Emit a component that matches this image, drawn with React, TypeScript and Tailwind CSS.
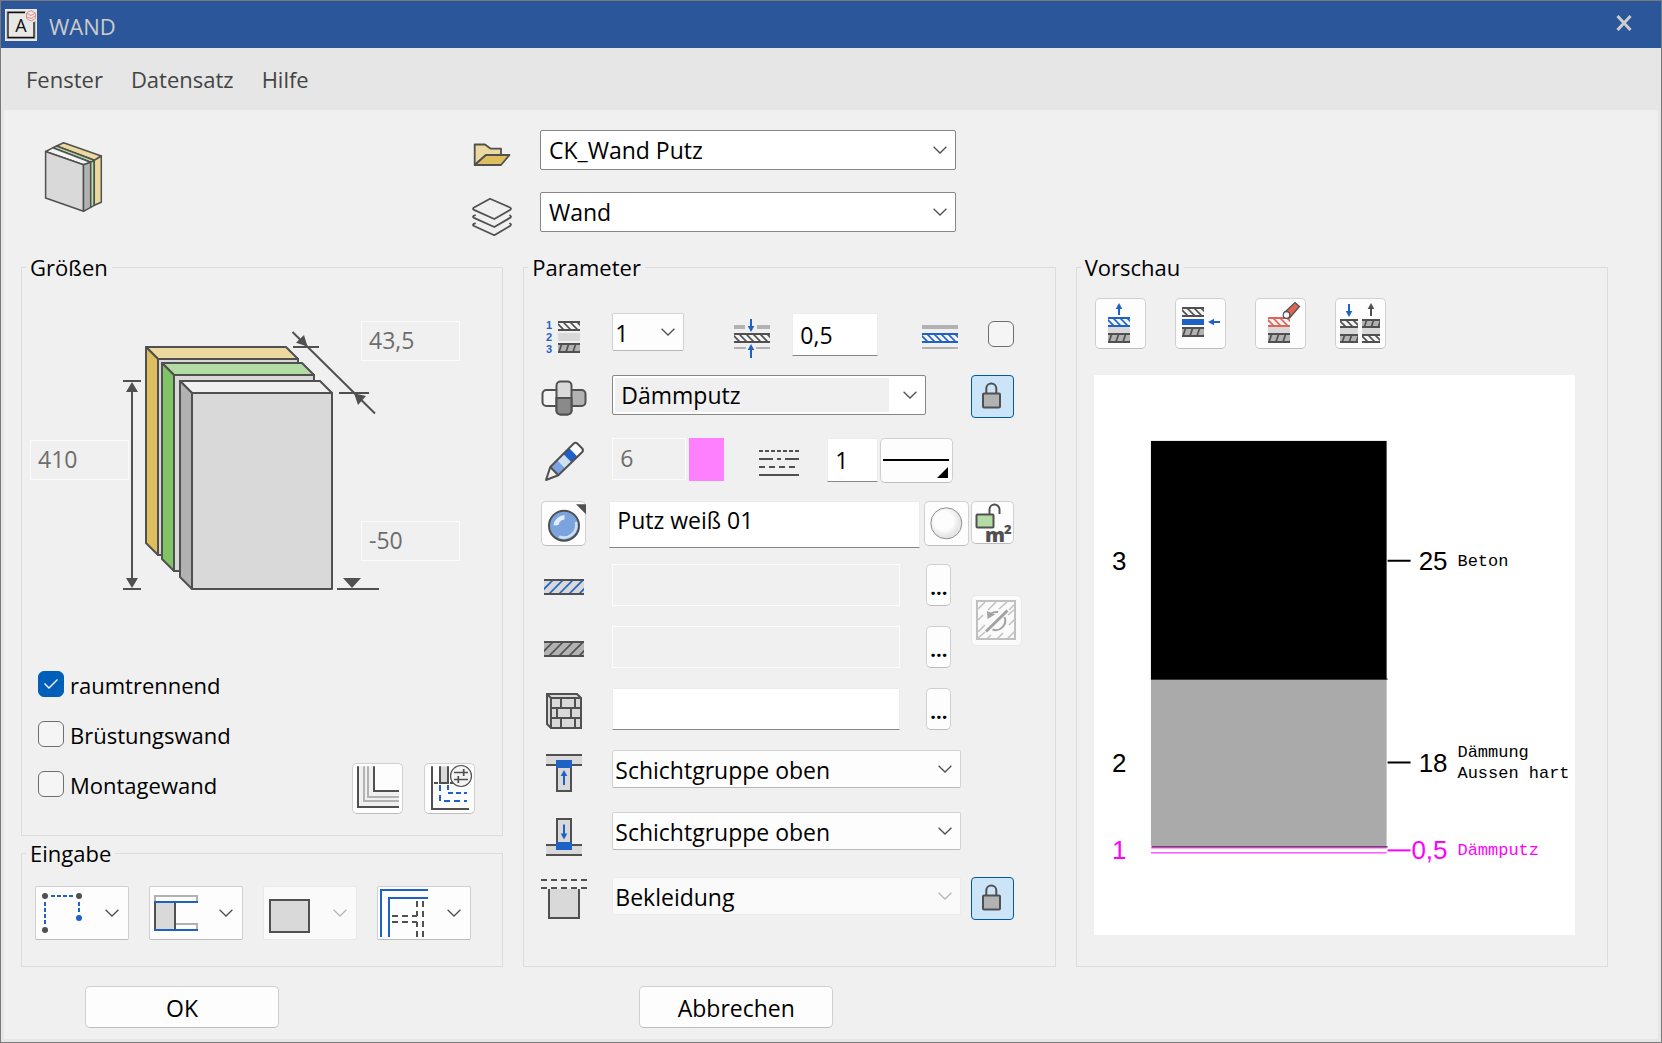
import type { ReactNode } from 'react';

const DARK = '#505050';
const BLUE = '#1f62c7';
const RED = '#e06455';
const LIGHT = '#d9d9d9';
const MID = '#b2b2b2';

function Icon({
  w,
  h,
  viewBox,
  className = '',
  children,
}: {
  w: number;
  h: number;
  viewBox?: string;
  className?: string;
  children: ReactNode;
}) {
  return (
    <svg
      width={w}
      height={h}
      viewBox={viewBox ?? `0 0 ${w} ${h}`}
      fill="none"
      stroke={DARK}
      strokeWidth={2}
      className={`shrink-0 overflow-visible ${className}`}
      aria-hidden
    >
      {children}
    </svg>
  );
}

/* Band with solid top and bottom edges and diagonal strokes between them. */
function Hatch({
  x,
  y,
  w,
  h,
  color = DARK,
  edge = color,
  fill = '#f4f4f4',
  lean = 'left',
  step = 7,
  shift = 0,
}: {
  x: number;
  y: number;
  w: number;
  h: number;
  color?: string;
  edge?: string;
  fill?: string;
  lean?: 'left' | 'right' | 'flat';
  step?: number;
  shift?: number;
}) {
  const run = lean === 'left' ? h : lean === 'right' ? -h / 3 : -h;
  const count = Math.ceil((w + 2 * h) / step) + 1;
  return (
    <svg x={x} y={y} width={w} height={h}>
      <rect width={w} height={h} fill={fill} stroke="none" />
      {Array.from({ length: count }, (_, i) => {
        const start = i * step - h + shift;
        return <line key={i} x1={start} y1={0} x2={start + run} y2={h} stroke={color} strokeWidth={1.7} />;
      })}
      <path d={`M0 1H${w}M0 ${h - 1}H${w}`} stroke={edge} />
    </svg>
  );
}

function Arrow({ x, y, length, dir, color = BLUE }: { x: number; y: number; length: number; dir: number; color?: string }) {
  return (
    <g transform={`translate(${x} ${y}) rotate(${dir})`} stroke={color}>
      <path d={`M0 4V${length}`} />
      <path d="M0 0L3.300 6H-3.300Z" fill={color} stroke="none" />
    </g>
  );
}

function Chevron({ muted = false, className = '' }: { muted?: boolean; className?: string }) {
  return (
    <svg
      width="14"
      height="8"
      viewBox="0 0 14 8"
      fill="none"
      stroke={muted ? '#b8b8b8' : '#505050'}
      strokeWidth="1.300"
      className={className}
      aria-hidden
    >
      <path d="M.6 .8L7 7L13.400 .8" />
    </svg>
  );
}

function Group({ title, className = '', children }: { title: string; className?: string; children: ReactNode }) {
  return (
    <fieldset className={`min-w-0 border border-[#dcdcdc] ${className}`}>
      <legend className="ml-1 px-1 text-[22px] leading-7">{title}</legend>
      {children}
    </fieldset>
  );
}

function Select({
  label,
  value,
  frame = 'soft',
  className = '',
  disabled = false,
}: {
  label: string;
  value: string;
  frame?: 'soft' | 'strong' | 'inset';
  className?: string;
  disabled?: boolean;
}) {
  const frames = {
    soft: 'h-[38px] pt-0.5 pl-[2px] leading-8 border-[#d2d2d2] border-b-[#b9b9b9] bg-[#fdfdfd]',
    strong: 'h-10 pl-2 leading-9 border-[#868686] bg-white',
    inset: 'h-10 pl-2 leading-9 border-[#868686] bg-[#f0f0f0] shadow-[inset_0_0_0_2px_white,inset_-36px_0_0_0_white]',
  };
  return (
    <div className={`relative ${className}`}>
      <select
        aria-label={label}
        disabled={disabled}
        className={`w-full appearance-none rounded-xs border text-[23px] text-black ${
          disabled ? 'h-[38px] border-[#ebebeb] bg-[#fafafa] pt-0.5 pl-[2px] leading-8 opacity-100' : frames[frame]
        }`}
      >
        <option>{value}</option>
      </select>
      <Chevron muted={disabled} className="pointer-events-none absolute top-1/2 right-[9px] -translate-y-1/2" />
    </div>
  );
}

function Field({
  label,
  value = '',
  disabled = false,
  className = '',
}: {
  label: string;
  value?: string;
  disabled?: boolean;
  className?: string;
}) {
  return (
    <input
      type="text"
      aria-label={label}
      defaultValue={value}
      disabled={disabled}
      className={`min-w-0 border px-[7px] text-[23px] leading-8 ${
        disabled
          ? 'border-[#fbfbfb] bg-[#f0f0f0] pb-[3px] text-[#6d6d6d]'
          : 'border-[#ececec] border-b-[#868686] bg-white text-black'
      } ${className}`}
    />
  );
}

function ToolButton({ label, className = '', children }: { label: string; className?: string; children: ReactNode }) {
  return (
    <button
      type="button"
      aria-label={label}
      className={`flex shrink-0 items-center justify-center rounded-[5px] border border-[#d0d0d0] border-b-[#bcbcbc] bg-[#fdfdfd] hover:bg-white ${className}`}
    >
      {children}
    </button>
  );
}

function LockButton({ label }: { label: string }) {
  return (
    <button
      type="button"
      aria-label={label}
      aria-pressed="true"
      className="size-[43px] rounded-[4px] border border-[#005a9e] bg-[#cce4f7]"
    >
      <Icon w={41} h={41} viewBox="1 1 41 41">
        <path d="M15.300 18V13.500a5 5 0 0 1 10 0V18" />
        <rect x="12" y="18.500" width="17" height="14" rx="1" fill={MID} />
      </Icon>
    </button>
  );
}

function Check({ label, checked = false }: { label?: string; checked?: boolean }) {
  return (
    <label className="flex h-[50px] items-center gap-1.5 text-[22px]">
      <span className="grid place-items-center">
        <input
          type="checkbox"
          defaultChecked={checked}
          aria-label={label ? undefined : 'Schicht hervorheben'}
          className="peer col-start-1 row-start-1 size-[26px] appearance-none rounded-[6px] border border-[#6e6e6e] bg-[#f5f5f5] checked:border-[#005fb8] checked:bg-[#005fb8]"
        />
        <svg
          width="16"
          height="12"
          viewBox="0 0 16 12"
          fill="none"
          stroke="white"
          strokeWidth="1.400"
          className="pointer-events-none invisible col-start-1 row-start-1 peer-checked:visible"
          aria-hidden
        >
          <path d="M1.500 5.500L6 10L14.500 1.500" />
        </svg>
      </span>
      {label ? <span className="pt-0.5">{label}</span> : null}
    </label>
  );
}

function Row({
  icon,
  side,
  className = 'h-[62px]',
  children,
}: {
  icon: ReactNode;
  side?: ReactNode;
  className?: string;
  children: ReactNode;
}) {
  return (
    <div className={`flex items-start ${className}`}>
      <Icon w={46} h={42} className="mr-[25px]">
        {icon}
      </Icon>
      <div className="flex min-w-0 flex-1 items-start">{children}</div>
      <div className="ml-2.5 w-[51px]">{side}</div>
    </div>
  );
}

function PickerRow({ label, icon, disabled = false }: { label: string; icon: ReactNode; disabled?: boolean }) {
  return (
    <div className="flex h-[62px] items-start">
      <Icon w={46} h={42} className="mr-[25px]">
        {icon}
      </Icon>
      <Field label={label} disabled={disabled} className="h-[42px] w-[288px]" />
      <ToolButton label={`${label} wählen`} className="ml-[26px] h-[42px] w-[25px] pt-1.5 text-xl font-bold">
        ...
      </ToolButton>
    </div>
  );
}

/* Slab with its front face at (x, y), extruded towards the upper left. */
function Slab({ x, y, top, side }: { x: number; y: number; top: string; side: string }) {
  return (
    <g strokeLinejoin="round">
      <path d={`M${x} ${y}h140v196h-140z`} fill={LIGHT} />
      <path d={`M${x} ${y}l-12 -12h140l12 12z`} fill={top} />
      <path d={`M${x} ${y}l-12 -12v196l12 12z`} fill={side} />
    </g>
  );
}

function WallDrawing() {
  return (
    <Icon w={430} h={272} className="col-start-1 row-start-1">
      <Slab x={128} y={38} top="#ebd99f" side="#dfbe60" />
      <Slab x={144} y={54} top="#b2dca4" side="#80c466" />
      <Slab x={162} y={72} top="#f0f0f0" side={MID} />
      <path d="M102 64V264M93 60H111M93 268H111" />
      <path d="M102 61L108 71H96ZM102 267L108 257H96Z" fill={DARK} stroke="none" />
      <path d="M262.500 11L345 92.500M263 26H289M309 72H339" />
      <path d="M277.500 25.500L266 21.700L274 14ZM324 72.300L336 75L328 84Z" fill={DARK} stroke="none" />
      <path d="M313 257H331L322 267Z" fill={DARK} stroke="none" />
      <path d="M307 268H349" />
    </Icon>
  );
}

function Sizes() {
  return (
    <Group title="Größen">
      <div className="ml-2 grid w-[430px] pt-10">
        <WallDrawing />
        <div className="col-start-1 row-start-1 flex justify-between">
          <Field label="Höhe" value="410" disabled className="mt-[119px] h-10 w-[99px]" />
          <div className="flex flex-col justify-between pb-8">
            <Field label="Dicke" value="43,5" disabled className="h-10 w-[99px]" />
            <Field label="Unterkante" value="-50" disabled className="h-10 w-[99px]" />
          </div>
        </div>
      </div>
      <div className="mt-[66px] flex items-end justify-between pr-[27px] pb-[21px] pl-4">
        <div className="flex flex-col pb-[5px]">
          <Check label="raumtrennend" checked />
          <Check label="Brüstungswand" />
          <Check label="Montagewand" />
        </div>
        <div className="flex gap-[21px]">
          <ToolButton label="Schichtverlauf" className="size-[51px]">
            <Icon w={49} h={49} viewBox="1 1 49 49">
              <path d="M6 3H22V28H47V44H6Z" fill="#f0f0f0" stroke="none" />
              <path d="M12 3.300V38H47M16 3.300V34H47" stroke={MID} />
              <path d="M6 3.300V44H47M22 3.300V28H47" />
            </Icon>
          </ToolButton>
          <ToolButton label="Anschluss einstellen" className="size-[51px]">
            <Icon w={49} h={49} viewBox="1 1 49 49">
              <path d="M8 3.300V46H45" />
              <path d="M16 3.300V20H24V3.300" fill={LIGHT} />
              <path d="M10 20H14M26 20H29" />
              <path d="M16 22V38H43" stroke={BLUE} strokeDasharray="6 4" />
              <path d="M24 22V30H43" stroke={BLUE} strokeDasharray="5 3" />
              <circle cx="37" cy="13" r="10.500" fill="#f4f4f4" strokeWidth="1.200" />
              <path d="M30 9.500H44M39.700 6V13M30 16.500H44M34.300 13V20" strokeWidth="1.700" />
            </Icon>
          </ToolButton>
        </div>
      </div>
    </Group>
  );
}

function InputMode({ label, disabled = false, children }: { label: string; disabled?: boolean; children: ReactNode }) {
  return (
    <button
      type="button"
      aria-label={label}
      disabled={disabled}
      className={`flex h-[54px] w-[94px] items-center justify-between rounded-xs border pr-[9px] ${
        disabled ? 'border-[#e8e8e8] bg-[#fafafa]' : 'border-[#d0d0d0] border-b-[#bcbcbc] bg-[#fdfdfd]'
      }`}
    >
      <Icon w={52} h={52} viewBox="1 1 52 52">
        {children}
      </Icon>
      <Chevron muted={disabled} />
    </button>
  );
}

function InputModes() {
  return (
    <Group title="Eingabe" className="flex-1">
      <div className="flex gap-5 pt-[19px] pb-[26px] pl-[13px]">
        <InputMode label="Polygonzug">
          <path d="M16 10H39M10 16V39M44 16V28" stroke={BLUE} strokeDasharray="4 2" />
          <g fill={DARK} stroke="none">
            <circle cx="10" cy="10" r="3" />
            <circle cx="44" cy="10" r="3" />
            <circle cx="10" cy="44" r="3" />
            <circle cx="44" cy="32" r="3" fill={BLUE} />
          </g>
        </InputMode>
        <InputMode label="Bezugslinie">
          <path d="M6 16V10H48V16M26 38H48V44" stroke={MID} />
          <rect x="6" y="16" width="20" height="28" fill={LIGHT} />
          <path d="M5 16H49M5 44H49" stroke={BLUE} />
        </InputMode>
        <InputMode label="Fläche" disabled>
          <rect x="7" y="14" width="39" height="32" fill={LIGHT} />
        </InputMode>
        <InputMode label="Verschneidung">
          <path d="M51 4H4V51M51 12H12V51" stroke={BLUE} />
          <path d="M40 15V30M46 15V51M40 51V36M15 30H40M15 36H40" strokeDasharray="6 4" />
        </InputMode>
      </div>
    </Group>
  );
}

function Parameters() {
  return (
    <Group title="Parameter">
      <div className="pt-8 pr-[33px] pb-6 pl-[17px]">
        <Row
          icon={
            <>
              <g
                fill={BLUE}
                stroke="none"
                fontSize="11"
                fontWeight="700"
                className="font-['Liberation_Sans',Arial,sans-serif]"
              >
                <text x="5" y="16">1</text>
                <text x="5" y="28">2</text>
                <text x="5" y="40">3</text>
              </g>
              <Hatch x={17} y={8} w={22} h={10} />
              <rect x="17" y="20" width="22" height="8" fill={LIGHT} stroke="none" />
              <Hatch x={17} y={30} w={22} h={10} fill={MID} lean="right" />
            </>
          }
          side={
            <div className="-mt-1 flex w-[43px] justify-end">
              <Check />
            </div>
          }
        >
          <Select label="Schichtnummer" value="1" className="w-[72px]" />
          <Icon w={36} h={46} className="ml-[50px]">
            <path d="M0 14H11M23 14H36" stroke={MID} strokeWidth="4" />
            <path d="M0 35H12M22 35H36" stroke={MID} />
            <Hatch x={0} y={20} w={36} h={10} />
            <Arrow x={17} y={19} length={13} dir={180} />
            <Arrow x={17} y={31} length={14} dir={0} />
          </Icon>
          <Field label="Schichtdicke" value="0,5" className="ml-[22px] h-[43px] w-[86px]" />
          <Icon w={36} h={46} className="ml-11">
            <path d="M0 14H36" stroke={MID} strokeWidth="4" />
            <Hatch x={0} y={20} w={36} h={10} color={BLUE} />
            <path d="M0 35H36" stroke={MID} />
          </Icon>
        </Row>

        <Row
          className="h-[63px]"
          icon={
            <>
              <rect x="1.500" y="15" width="20" height="16" rx="4" fill="#f4f4f4" />
              <rect x="24" y="15" width="20.500" height="16" rx="4" fill={MID} />
              <rect x="15.500" y="6.500" width="15" height="33" rx="4" fill={LIGHT} />
              <path d="M15.500 23H30.500V35.500a4 4 0 0 1 -4 4H19.500a4 4 0 0 1 -4 -4Z" fill="#8a8a8a" />
            </>
          }
          side={<LockButton label="Baustoff sperren" />}
        >
          <Select label="Baustoff" value="Dämmputz" frame="inset" className="w-[314px]" />
        </Row>

        <Row
          className="h-[63px]"
          icon={
            <>
              <path d="M9.300 29L17.300 37.300L24.300 30.300L16.300 22Z" fill="#7ba3de" stroke="none" />
              <path d="M16.300 22L24.300 30.300L30.300 24.300L22.300 16Z" fill="#cfdff4" stroke="none" />
              <path d="M22.300 16L30.300 24.300L36.300 18.300L28.300 10Z" fill={BLUE} stroke="none" />
              <path d="M28.300 10L36.300 18.300L42 12L35 4.500Z" fill="#fff" stroke="none" />
              <path
                d="M9.300 29L32.500 5.800Q34.500 3.800 36.500 5.800L41 10.300Q43 12.300 41 14.300L17.300 37.300L5 42ZM9.300 29L17.300 37.300"
                strokeLinejoin="round"
              />
            </>
          }
        >
          <Field label="Stift" value="6" disabled className="h-[42px] w-[74px]" />
          <button type="button" aria-label="Stiftfarbe" className="ml-[3px] h-[43px] w-[35px] bg-[#ff80ff]" />
          <Icon w={40} h={42} className="ml-[35px]">
            <path d="M0 13H40" strokeDasharray="4 2" />
            <path d="M0 21H40" strokeDasharray="14 4 4 4" />
            <path d="M0 29H40" strokeDasharray="6 4" />
            <path d="M0 37H40" />
          </Icon>
          <Field label="Linienart" value="1" className="ml-7 h-11 w-[51px]" />
          <ToolButton label="Linienart wählen" className="ml-[2px] h-[45px] w-[73px]">
            <Icon w={71} h={43} viewBox="1 1 71 43">
              <path d="M3 22H69" stroke="#000" />
              <path d="M68 29V40H57Z" fill="#000" stroke="none" />
            </Icon>
          </ToolButton>
        </Row>

        <div className="flex h-[63px] items-start pr-2">
          <ToolButton label="Oberfläche" className="size-[45px]">
            <Icon w={43} h={43} viewBox="1 1 43 43">
              <circle cx="23" cy="24.700" r="15" fill="#7ba3de" />
              <path d="M35 21a12.500 12.500 0 0 1 -17 14.500" stroke="#cfdff4" strokeWidth="2.500" />
              <path d="M12.500 24.500a11.500 11.500 0 0 1 11 -10.500v4.500a7 7 0 0 0 -6 5.500Z" fill="#e3edfa" stroke="none" />
              <path d="M35 3.300H45V13.300Z" fill={DARK} stroke="none" />
            </Icon>
          </ToolButton>
          <Field label="Oberflächenname" value="Putz weiß 01" className="ml-[23px] h-[47px] flex-1 pb-2.5" />
          <ToolButton label="Material" className="ml-1 size-[45px]">
            <svg width="43" height="43" viewBox="1 1 43 43" aria-hidden>
              <radialGradient id="sphere" cx="42%" cy="42%">
                <stop offset="60%" stopColor="#fdfdfd" />
                <stop offset="100%" stopColor="#e6e6e6" />
              </radialGradient>
              <circle cx="22.300" cy="22.300" r="15.500" fill="url(#sphere)" stroke="#8f8f8f" />
            </svg>
          </ToolButton>
          <ToolButton label="Flächenermittlung" className="ml-[2px] size-[43px]">
            <Icon w={41} h={41} viewBox="1 1 41 41">
              <path d="M18.500 13V8.500a5 5 0 0 1 10 0V13" />
              <rect x="5.500" y="13.500" width="17" height="13" rx="1" fill="#b2dca4" />
              <g fill={DARK} stroke="none" fontWeight="800">
                <text x="14" y="41" fontSize="20">m</text>
                <text x="33" y="33" fontSize="13">2</text>
              </g>
            </Icon>
          </ToolButton>
        </div>

        <div className="flex">
          <div className="flex-1">
            <PickerRow
              label="Schraffur"
              disabled
              icon={
                <Hatch x={3} y={15} w={40} h={16} fill={LIGHT} color={BLUE} edge={DARK} lean="flat" step={10} shift={6} />
              }
            />
            <PickerRow
              label="Muster"
              disabled
              icon={<Hatch x={3} y={15} w={40} h={16} fill={MID} lean="flat" step={10} shift={6} />}
            />
          </div>
          <div className="w-[51px] pt-[31px]">
            <button
              type="button"
              disabled
              aria-label="Schraffur zurücksetzen"
              className="size-[51px] rounded-[5px] border border-[#e9e9e9] bg-[#fafafa]"
            >
              <Icon w={49} h={49} viewBox="1 1 49 49">
                <g stroke="#c0c0c0">
                  <path
                    d="M7 14L14 7M7 25L12 20M17 15L25 7M7 37L14 30M28 14L36 7M38 15L43 10M7 43L14 37M16 44L20 40M26 44L32 38M38 30L44 24M36 44L44 36M37 20L44 14"
                    strokeWidth="1.500"
                  />
                  <rect x="6" y="6" width="38" height="38" />
                </g>
                <g stroke="#a2a2a2">
                  <path d="M20 18.500Q23 16.500 27 17M33.500 22a9.500 9.500 0 0 1 -12 12.500" />
                  <path d="M16 16L24 19.500L16.500 24Z" fill="#a2a2a2" stroke="none" />
                  <path d="M15 36.500L36.500 15.500" strokeWidth="3" />
                </g>
              </Icon>
            </button>
          </div>
        </div>

        <PickerRow
          label="Textur"
          icon={
            <>
              <path d="M6 6H36L40 10V40H10L6 36Z" fill={LIGHT} />
              <path d="M6 6L10 10H40M10 10V40M10 20H40M10 30H40M20 10V20M34 10V20M16 20V30M30 20V30M20 30V40M34 30V40" />
            </>
          }
        />

        <Row
          icon={
            <>
              <path d="M5 5H41V15H5Z" fill={LIGHT} stroke="none" />
              <path d="M5 5H41M5 15H41" />
              <rect x="16" y="16" width="14" height="25" fill={LIGHT} />
              <rect x="15" y="10" width="16" height="8" fill={BLUE} stroke="none" />
              <Arrow x={23} y={20} length={15} dir={0} />
            </>
          }
        >
          <Select label="Anschluss oben" value="Schichtgruppe oben" className="w-full" />
        </Row>

        <Row
          className="h-[65px]"
          icon={
            <>
              <path d="M5 33H41V43H5Z" fill={LIGHT} stroke="none" />
              <path d="M5 33H41M5 43H41" />
              <rect x="16" y="7" width="14" height="25" fill={LIGHT} />
              <rect x="15" y="30" width="16" height="8" fill={BLUE} stroke="none" />
              <Arrow x={23} y={27.5} length={15} dir={180} />
            </>
          }
        >
          <Select label="Anschluss unten" value="Schichtgruppe oben" className="w-full" />
        </Row>

        <Row
          className="h-[61px]"
          icon={
            <>
              <path d="M0 3H46M0 11H46" strokeDasharray="6 4" />
              <path d="M8 12V41H38V12" fill={LIGHT} />
            </>
          }
          side={<LockButton label="Bekleidung sperren" />}
        >
          <Select label="Bekleidung" value="Bekleidung" disabled className="w-full" />
        </Row>
      </div>
    </Group>
  );
}

function LayerPreview() {
  return (
    <svg viewBox="0 0 482 561" className="mt-[26px] h-auto w-full bg-white font-['Liberation_Sans',Arial,sans-serif]">
      <rect x="57" y="66" width="236" height="239" />
      <rect x="57" y="305" width="236" height="167" fill="#aaa" />
      <path d="M57 304.500H294M58 472.500H294" stroke="#000" />
      <path d="M57 473.500H293M57 478.500H293" stroke="#f0f" />
      <path d="M294 186H317M294 388H317" stroke="#000" strokeWidth="2" />
      <path d="M294 476H317" stroke="#f0f" strokeWidth="2" />
      <g fontSize="26">
        <text x="18" y="195">3</text>
        <text x="18" y="398">2</text>
        <text x="18" y="485" fill="#f0f">1</text>
        <g textAnchor="end">
          <text x="354" y="195">25</text>
          <text x="354" y="398">18</text>
          <text x="354" y="485" fill="#f0f">0,5</text>
        </g>
      </g>
      <g fontSize="17" className="font-['Liberation_Mono',monospace]">
        <text x="364" y="191">Beton</text>
        <text x="364" y="383">Dämmung</text>
        <text x="364" y="404">Aussen hart</text>
        <text x="364" y="481" fill="#f0f">Dämmputz</text>
      </g>
    </svg>
  );
}

function Preview() {
  return (
    <Group title="Vorschau">
      <div className="pt-[17px] pr-8 pb-[29px] pl-[17px]">
        <div className="flex gap-[29px] pl-px">
          <ToolButton label="Schicht einfügen" className="size-[51px]">
            <Icon w={49} h={49} viewBox="1 1 49 49">
              <Arrow x={24} y={5} length={12} dir={0} />
              <Hatch x={13} y={19} w={22} h={10} color={BLUE} />
              <rect x="13" y="29" width="22" height="6" fill={LIGHT} stroke="none" />
              <Hatch x={13} y={35} w={22} h={10} fill={MID} lean="right" />
            </Icon>
          </ToolButton>
          <ToolButton label="Schicht dazwischen einfügen" className="size-[51px]">
            <Icon w={49} h={49} viewBox="1 1 49 49">
              <Hatch x={7} y={9} w={22} h={10} />
              <rect x="7" y="21" width="22" height="6" fill={BLUE} stroke="none" />
              <Hatch x={7} y={29} w={22} h={10} fill={MID} lean="right" />
              <Arrow x={33} y={24} length={12} dir={-90} />
            </Icon>
          </ToolButton>
          <ToolButton label="Schicht löschen" className="size-[51px]">
            <Icon w={49} h={49} viewBox="1 1 49 49">
              <Hatch x={13} y={19} w={22} h={10} color={RED} />
              <rect x="13" y="29" width="22" height="6" fill={LIGHT} stroke="none" />
              <Hatch x={13} y={35} w={22} h={10} fill={MID} lean="right" />
              <path d="M30 14L40 4.500L44.500 8.500L35 19.500Z" fill={RED} strokeWidth="1.200" />
              <circle cx="31.500" cy="17" r="3.300" fill="#f4f4f4" strokeWidth="1.200" />
            </Icon>
          </ToolButton>
          <ToolButton label="Schichtfolge umkehren" className="size-[51px]">
            <Icon w={49} h={49} viewBox="1 1 49 49">
              <Arrow x={14} y={19} length={13} dir={180} />
              <Arrow x={36} y={5} length={13} dir={0} color={DARK} />
              <Hatch x={5} y={21} w={18} h={9} />
              <Hatch x={27} y={21} w={18} h={9} fill={MID} lean="right" />
              <rect x="5" y="30" width="18" height="6" fill={LIGHT} stroke="none" />
              <rect x="27" y="30" width="18" height="6" fill={LIGHT} stroke="none" />
              <Hatch x={5} y={36} w={18} h={9} fill={MID} lean="right" />
              <Hatch x={27} y={36} w={18} h={9} />
            </Icon>
          </ToolButton>
        </div>
        <LayerPreview />
      </div>
    </Group>
  );
}

function Header() {
  return (
    <div className="flex gap-x-7 pt-5 pl-[41px]">
      <Icon w={58} h={71} className="mt-3 mr-[341px]">
        <g strokeLinejoin="round" strokeWidth="1.500">
          <path d="M11.600 4L18.600 .7L56.300 14L49.300 18.300Z" fill="#ebd99f" />
          <path d="M7.800 5.800L11.600 4L49.300 18.300L45.700 20.300Z" fill="#b2dca4" />
          <path d="M.6 9.500L7.800 5.800L45.700 20.300L38.500 22.700Z" fill="#f4f4f4" />
          <path d="M.6 9.500L38.500 22.700V69.300L.6 56Z" fill={LIGHT} />
          <path d="M38.500 22.700L45.700 20.300V65.300L38.500 69.300Z" fill={MID} />
          <path d="M45.700 20.300L49.300 18.300V63.300L45.700 65.300Z" fill="#b2dca4" />
          <path d="M49.300 18.300L56.300 14V60.300L49.300 63.300Z" fill="#ebd99f" />
        </g>
      </Icon>
      <div className="flex flex-col gap-[22px]">
        <div className="flex gap-7">
          <Icon w={40} h={40} viewBox="0 -12 40 40">
            <g strokeLinejoin="round" strokeWidth="1.800">
              <path d="M2.700 22V2.500H13L18.700 6.700H29V13H14L2.700 23Z" fill="#ebd99f" />
              <path d="M2.700 23L14 13H37.500L29 23Z" fill="#dfbe60" />
            </g>
          </Icon>
          <Select label="Datensatz" value="CK_Wand Putz" frame="strong" className="w-[416px]" />
        </div>
        <div className="flex gap-7">
          <Icon w={40} h={40} viewBox="0 -6 40 40">
            <g strokeLinejoin="round" strokeLinecap="round" strokeWidth="1.800">
              <path d="M18 .7L38 9.500Q40 10.700 38 11.900L22.300 21L2 11.900Q0 10.700 2 9.500Z" />
              <path d="M3 17.300L2 17.800Q0 18.800 2 19.900L22.300 29L38 19.900Q40 18.800 38 17.500" />
              <path d="M3 25.400L2 25.900Q0 26.900 2 28L22.300 37.200L38 28Q40 26.900 38 25.600" />
            </g>
          </Icon>
          <Select label="Ebene" value="Wand" frame="strong" className="w-[416px]" />
        </div>
      </div>
    </div>
  );
}

export default function App() {
  return (
    <div className="flex min-h-screen flex-col border border-[#7a7a7a] bg-[#e6e6e6] font-['Segoe_UI','Open_Sans',sans-serif] text-black">
      <header className="flex h-[47px] items-center bg-[#2b579a] pr-[29px] pl-1 text-[#ccc]">
        <svg width="32" height="32" viewBox="0 0 32 32" aria-hidden>
          <rect width="32" height="32" fill="#e8e8e6" />
          <rect x="2" y="2.500" width="28" height="27" fill="none" stroke="#aaa" />
          <path d="M20 3.500H3V28.500H29V13" fill="none" stroke="#111" strokeWidth="1.300" />
          <text x="16" y="23" textAnchor="middle" fontSize="18" fill="#111">A</text>
          <rect x="20.500" y="1" width="11" height="11" fill="#e8e8e6" />
          <path d="M26 1.500L30.500 4V9.500L26 12L21.500 9.500V4ZM22 4.500L26 6.500L30 4.500M22 8L26 9.500L30 7" fill="none" stroke="#e58f8a" />
        </svg>
        <h1 className="ml-3 flex-1 pt-0.5 text-[22px] leading-8">WAND</h1>
        <button type="button" aria-label="Schließen" className="mb-1">
          <svg width="16" height="16" viewBox="0 0 16 16" stroke="#ccc" strokeWidth="3" aria-hidden>
            <path d="M1.500 1L14.500 15M14.500 1L1.500 15" />
          </svg>
        </button>
      </header>

      <nav className="flex h-[62px] items-center gap-7 pt-px pl-[25px] text-[22px] text-[#444]">
        <button type="button">Fenster</button>
        <button type="button">Datensatz</button>
        <button type="button">Hilfe</button>
      </nav>

      <main className="mx-[3px] mb-[3px] flex-1 bg-[#f0f0f0]">
        <Header />
        <div className="mt-[21px] grid grid-cols-[482fr_532fr_532fr] gap-x-[20px] pr-[50px] pl-[17px]">
          <div className="flex flex-col gap-[3px]">
            <Sizes />
            <InputModes />
          </div>
          <Parameters />
          <Preview />
        </div>
        <div className="mt-[19px] grid grid-cols-[482fr_532fr_532fr] gap-x-[20px] pr-[50px] pb-[11px] pl-[17px]">
          <ToolButton label="OK" className="ml-16 h-[42px] w-[194px] pt-0.5 text-[23px]">
            OK
          </ToolButton>
          <ToolButton label="Abbrechen" className="ml-[116px] h-[42px] w-[194px] pt-0.5 text-[23px]">
            Abbrechen
          </ToolButton>
        </div>
      </main>
    </div>
  );
}
